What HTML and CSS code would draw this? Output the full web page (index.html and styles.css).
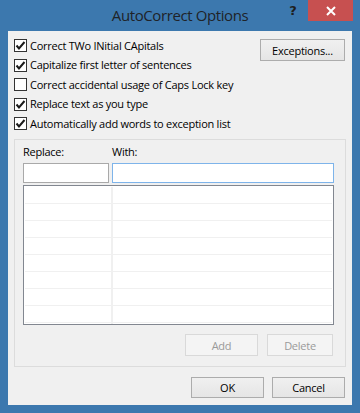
FILE: index.html
```html
<!DOCTYPE html>
<html>
<head>
<meta charset="utf-8">
<link rel="stylesheet" href="styles.css">
</head>
<body>
<div class="window">
  <div class="titlebar">
    <div class="tb-spacer"></div>
    <div class="title">AutoCorrect Options</div>
    <div class="controls">
      <span class="help">?</span>
      <span class="close"><svg width="10" height="10" viewBox="0 0 10 10"><path d="M1 1L9 9M9 1L1 9" stroke="#fff" stroke-width="2"/></svg></span>
    </div>
  </div>
  <div class="client">
    <div class="top">
      <div class="checks">
        <div class="check"><span class="box"><svg width="11" height="11" viewBox="0 0 11 11"><path d="M1.5 5.5L4 8.5L9.5 2" fill="none" stroke="#1a1a1a" stroke-width="2"/></svg></span><span class="ctext">Correct TWo INitial CApitals</span></div>
        <div class="check"><span class="box"><svg width="11" height="11" viewBox="0 0 11 11"><path d="M1.5 5.5L4 8.5L9.5 2" fill="none" stroke="#1a1a1a" stroke-width="2"/></svg></span><span class="ctext">Capitalize first letter of sentences</span></div>
        <div class="check"><span class="box"></span><span class="ctext">Correct accidental usage of Caps Lock key</span></div>
        <div class="check"><span class="box"><svg width="11" height="11" viewBox="0 0 11 11"><path d="M1.5 5.5L4 8.5L9.5 2" fill="none" stroke="#1a1a1a" stroke-width="2"/></svg></span><span class="ctext">Replace text as you type</span></div>
        <div class="check"><span class="box"><svg width="11" height="11" viewBox="0 0 11 11"><path d="M1.5 5.5L4 8.5L9.5 2" fill="none" stroke="#1a1a1a" stroke-width="2"/></svg></span><span class="ctext">Automatically add words to exception list</span></div>
      </div>
      <div class="btn btn-exc">Exceptions...</div>
    </div>
    <div class="group">
      <div class="labels"><span class="lbl-rep">Replace:</span><span class="lbl-with">With:</span></div>
      <div class="inputs"><div class="input input-rep"></div><div class="input input-with"></div></div>
      <div class="list">
        <div class="row"><div class="cell c1"></div><div class="cell c2"></div></div>
        <div class="row"><div class="cell c1"></div><div class="cell c2"></div></div>
        <div class="row"><div class="cell c1"></div><div class="cell c2"></div></div>
        <div class="row"><div class="cell c1"></div><div class="cell c2"></div></div>
        <div class="row"><div class="cell c1"></div><div class="cell c2"></div></div>
        <div class="row"><div class="cell c1"></div><div class="cell c2"></div></div>
        <div class="row"><div class="cell c1"></div><div class="cell c2"></div></div>
        <div class="row"><div class="cell c1"></div><div class="cell c2"></div></div>
        <div class="row"><div class="cell c1"></div><div class="cell c2"></div></div>
      </div>
      <div class="group-actions">
        <div class="btn disabled btn-add">Add</div>
        <div class="btn disabled btn-del">Delete</div>
      </div>
    </div>
    <div class="actions">
      <div class="btn btn-ok">OK</div>
      <div class="btn btn-cancel">Cancel</div>
    </div>
  </div>
</div>
</body>
</html>
```
FILE: styles.css
```css
* { box-sizing: border-box; }
html, body { margin: 0; padding: 0; }
body {
  background: #3c78ae;
  font-family: "Open Sans", "Noto Sans", sans-serif;
  font-size: 11px;
  letter-spacing: -0.25px;
  color: #000;
}
.window {
  width: 360px;
  height: 413px;
  background: #3c78ae;
  display: flex;
  flex-direction: column;
}
.titlebar {
  height: 31px;
  display: grid;
  grid-template-columns: 1fr auto 1fr;
}
.title {
  font-size: 15px;
  letter-spacing: -0.4px;
  line-height: 30px;
  color: #1f2328;
  white-space: nowrap;
}
.controls {
  display: flex;
  justify-content: flex-end;
  align-items: flex-start;
  padding-right: 7px;
}
.help {
  width: 24px;
  margin-right: 3px;
  height: 21px;
  font-family: "DejaVu Sans", sans-serif;
  font-weight: bold;
  font-size: 13px;
  letter-spacing: 0;
  line-height: 21px;
  text-align: center;
  color: #1e1e1e;
}
.close {
  width: 45px;
  height: 21px;
  background: #c75050;
  display: flex;
  align-items: center;
  justify-content: center;
}
.client {
  margin: 0 8px;
  height: 374px;
  background: #f0f0f0;
  padding: 5px 6px 7px 6px;
  display: flex;
  flex-direction: column;
}
.top {
  display: flex;
  justify-content: space-between;
  align-items: flex-start;
}
.checks {
  display: flex;
  flex-direction: column;
}
.check {
  height: 19.5px;
  display: flex;
  align-items: center;
}
.box {
  width: 13px;
  height: 13px;
  border: 1px solid #333;
  background: #fff;
  display: flex;
  align-items: center;
  justify-content: center;
  margin-right: 3px;
}
.ctext {
  white-space: nowrap;
  line-height: 16px;
}
.btn {
  display: flex;
  align-items: center;
  justify-content: center;
  border: 1px solid #acacac;
  background: linear-gradient(#f0f0f0, #e5e5e5);
  color: #000;
  white-space: nowrap;
}
.btn-exc {
  width: 85px;
  height: 22px;
  margin-top: 3px;
  margin-right: 1px;
}
.group {
  margin-top: 5.5px;
  width: 332px;
  height: 228px;
  border: 1px solid #dcdcdc;
  padding: 0 11px 0 8px;
  display: flex;
  flex-direction: column;
}
.labels {
  height: 23px;
  display: flex;
  align-items: flex-end;
  padding-bottom: 3px;
  line-height: 16px;
}
.lbl-rep { width: 89px; }
.inputs {
  display: flex;
  gap: 3px;
}
.input {
  height: 20px;
  background: #fff;
  border: 1px solid #a9a9a9;
}
.input-rep { width: 86px; }
.input-with { width: 222px; border-color: #7eb4ea; }
.list {
  margin-top: 2px;
  height: 140px;
  border: 1px solid #828790;
  background: #fff;
  overflow: hidden;
  padding-top: 1px;
}
.row {
  height: 17px;
  display: flex;
  margin: 0 1px;
  border-bottom: 1px solid #f0f0f0;
}
.c1 {
  width: 88px;
  border-right: 2px solid #f0f0f0;
}
.c2 { flex: 1; }
.group-actions {
  margin-top: 9px;
  display: flex;
  justify-content: flex-end;
  gap: 9px;
  padding-right: 1px;
}
.disabled {
  border-color: #d9d9d9;
  background: #f4f4f4;
  color: #9a9a9a;
}
.btn-add { width: 73px; height: 22px; }
.btn-del { width: 66px; height: 22px; }
.actions {
  margin-top: 10px;
  display: flex;
  justify-content: flex-end;
  gap: 8px;
  padding-right: 1px;
}
.btn-ok, .btn-cancel { width: 73px; height: 21px; }
```
